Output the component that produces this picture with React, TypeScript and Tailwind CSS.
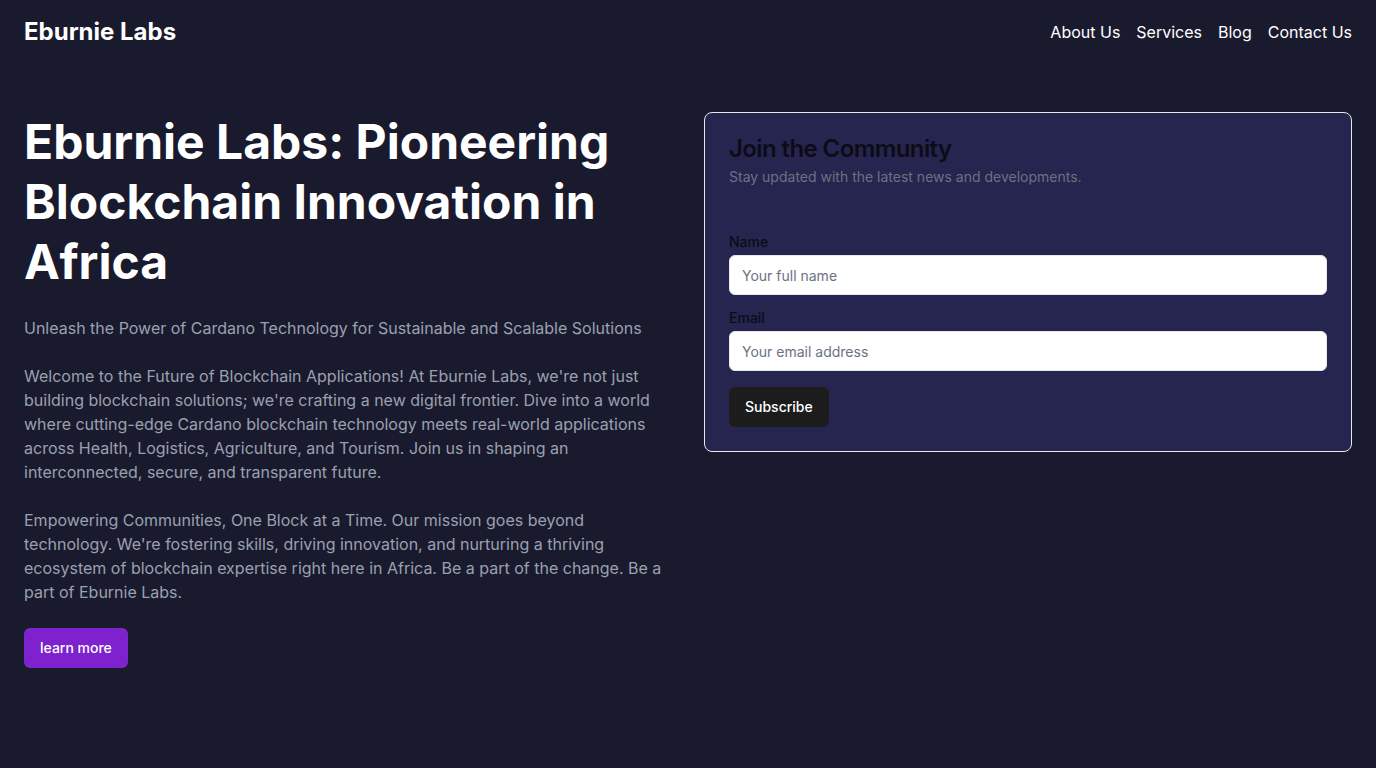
export default function App() {
  return (
    <div className="min-h-screen bg-[#1a1a2e] text-white font-['Inter',sans-serif]">
      <header className="flex h-16 items-center justify-between px-6">
        <h1 className="text-2xl font-bold">Eburnie Labs</h1>
        <nav className="flex gap-4 text-base">
          <a href="#">About Us</a>
          <a href="#">Services</a>
          <a href="#">Blog</a>
          <a href="#">Contact Us</a>
        </nav>
      </header>

      <main className="grid grid-cols-2 gap-8 px-6 pt-12">
        <section>
          <h2 className="text-5xl font-bold leading-tight">
            Eburnie Labs: Pioneering Blockchain Innovation in Africa
          </h2>
          <p className="mt-6 text-gray-400">
            Unleash the Power of Cardano Technology for Sustainable and Scalable Solutions
          </p>
          <p className="mt-6 text-gray-400">
            Welcome to the Future of Blockchain Applications! At Eburnie Labs, we're not just
            building blockchain solutions; we're crafting a new digital frontier. Dive into a world
            where cutting-edge Cardano blockchain technology meets real-world applications across
            Health, Logistics, Agriculture, and Tourism. Join us in shaping an interconnected,
            secure, and transparent future.
          </p>
          <p className="mt-6 text-gray-400">
            Empowering Communities, One Block at a Time. Our mission goes beyond technology. We're
            fostering skills, driving innovation, and nurturing a thriving ecosystem of blockchain
            expertise right here in Africa. Be a part of the change. Be a part of Eburnie Labs.
          </p>
          <button className="mt-6 h-10 rounded-md bg-[#7e22ce] px-4 text-sm font-medium">
            learn more
          </button>
        </section>

        <section className="self-start rounded-lg border border-gray-200 bg-[#25254f]">
          <div className="flex flex-col gap-1.5 p-6">
            <h3 className="text-2xl font-semibold leading-none tracking-tight text-[#0c0c16]">
              Join the Community
            </h3>
            <p className="text-sm text-gray-500">Stay updated with the latest news and developments.</p>
          </div>
          <form className="flex flex-col gap-4 px-6 pb-6 pt-6">
            <div className="flex flex-col gap-1.5">
              <label className="text-sm font-medium leading-none text-[#0c0c16]">Name</label>
              <input
                className="h-10 rounded-md border border-gray-200 bg-white px-3 text-sm text-black placeholder:text-gray-500"
                placeholder="Your full name"
              />
            </div>
            <div className="flex flex-col gap-1.5">
              <label className="text-sm font-medium leading-none text-[#0c0c16]">Email</label>
              <input
                className="h-10 rounded-md border border-gray-200 bg-white px-3 text-sm text-black placeholder:text-gray-500"
                placeholder="Your email address"
              />
            </div>
            <button
              type="button"
              className="h-10 self-start rounded-md bg-[#1c1c1c] px-4 text-sm font-medium"
            >
              Subscribe
            </button>
          </form>
        </section>
      </main>
    </div>
  );
}
